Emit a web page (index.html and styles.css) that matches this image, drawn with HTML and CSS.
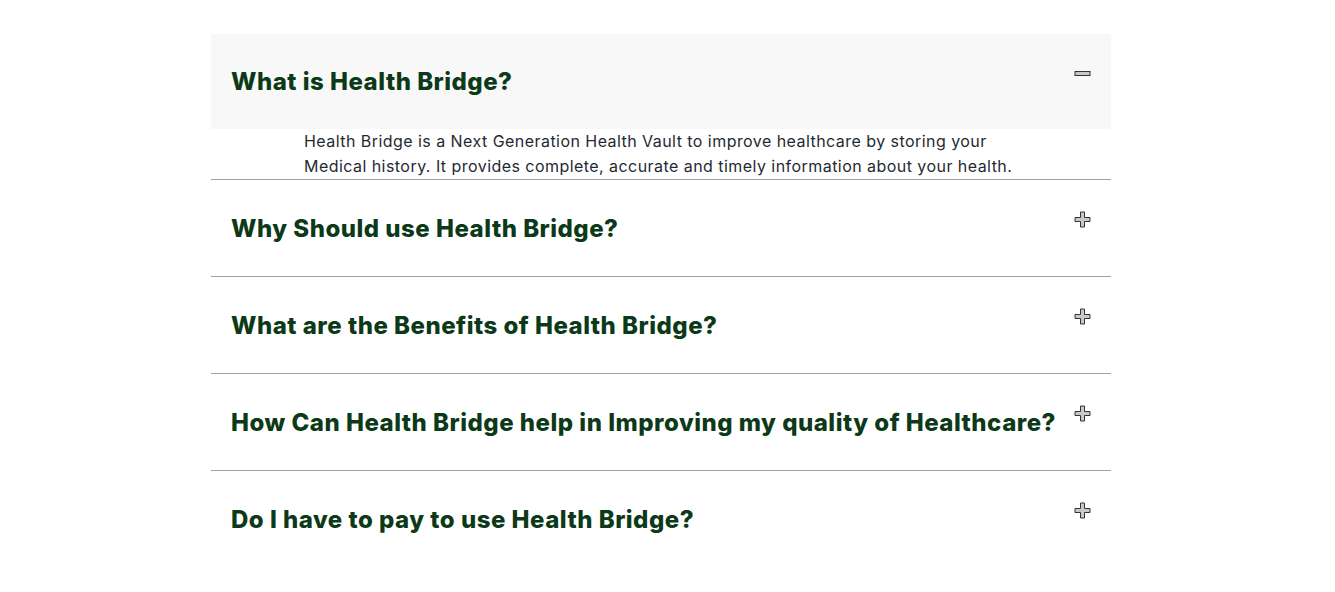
FILE: index.html
```html
<!DOCTYPE html>
<html lang="en">
<head>
<meta charset="utf-8">
<title>FAQ</title>
<link rel="stylesheet" href="styles.css">
</head>
<body>
<div class="faq">
  <div class="item open">
    <div class="head">
      <h3 class="q">What is Health Bridge?</h3>
      <svg class="ico" width="17" height="17" viewBox="0 0 17 17"><rect x="1" y="6.5" width="15" height="4" fill="#c8c8c8" stroke="#333" stroke-width="1"/></svg>
    </div>
    <p class="a">Health Bridge is a Next Generation Health Vault to improve healthcare by storing your Medical history. It provides complete, accurate and timely information about your health.</p>
  </div>
  <div class="item">
    <div class="head">
      <h3 class="q">Why Should use Health Bridge?</h3>
      <svg class="ico" width="17" height="17" viewBox="0 0 17 17"><path d="M6.5 1h4v5.5h5.5v4h-5.5v5.5h-4v-5.5h-5.5v-4h5.5z" fill="#c8c8c8" stroke="#333" stroke-width="1"/></svg>
    </div>
  </div>
  <div class="item">
    <div class="head">
      <h3 class="q">What are the Benefits of Health Bridge?</h3>
      <svg class="ico" width="17" height="17" viewBox="0 0 17 17"><path d="M6.5 1h4v5.5h5.5v4h-5.5v5.5h-4v-5.5h-5.5v-4h5.5z" fill="#c8c8c8" stroke="#333" stroke-width="1"/></svg>
    </div>
  </div>
  <div class="item">
    <div class="head">
      <h3 class="q">How Can Health Bridge help in Improving my quality of Healthcare?</h3>
      <svg class="ico" width="17" height="17" viewBox="0 0 17 17"><path d="M6.5 1h4v5.5h5.5v4h-5.5v5.5h-4v-5.5h-5.5v-4h5.5z" fill="#c8c8c8" stroke="#333" stroke-width="1"/></svg>
    </div>
  </div>
  <div class="item last">
    <div class="head">
      <h3 class="q">Do I have to pay to use Health Bridge?</h3>
      <svg class="ico" width="17" height="17" viewBox="0 0 17 17"><path d="M6.5 1h4v5.5h5.5v4h-5.5v5.5h-4v-5.5h-5.5v-4h5.5z" fill="#c8c8c8" stroke="#333" stroke-width="1"/></svg>
    </div>
  </div>
</div>
</body>
</html>
```

FILE: styles.css
```css
* { box-sizing: border-box; }
html, body { margin: 0; padding: 0; background: #fff; }
body { font-family: Inter, "Liberation Sans", sans-serif; }
.faq {
  width: 900px;
  margin: 34px 0 0 211px;
}
.item { border-bottom: 1px solid #a3a3a3; }
.item.last { border-bottom: none; }
.head {
  height: 96px;
  display: flex;
  justify-content: space-between;
  align-items: flex-start;
  padding: 0 20px 0 20px;
}
.open .head { background: #f8f8f8; height: 95px; }
.q {
  margin: 0;
  align-self: center;
  font-size: 24px;
  font-weight: 800;
  color: #0c3918;
  letter-spacing: 0.5px;
}
.ico { margin-top: 31px; flex: none; }
.a {
  margin: 0;
  padding: 0 92px 0 93px;
  font-size: 16px;
  line-height: 25px;
  letter-spacing: 0.45px;
  color: #1f2a33;
}
```
